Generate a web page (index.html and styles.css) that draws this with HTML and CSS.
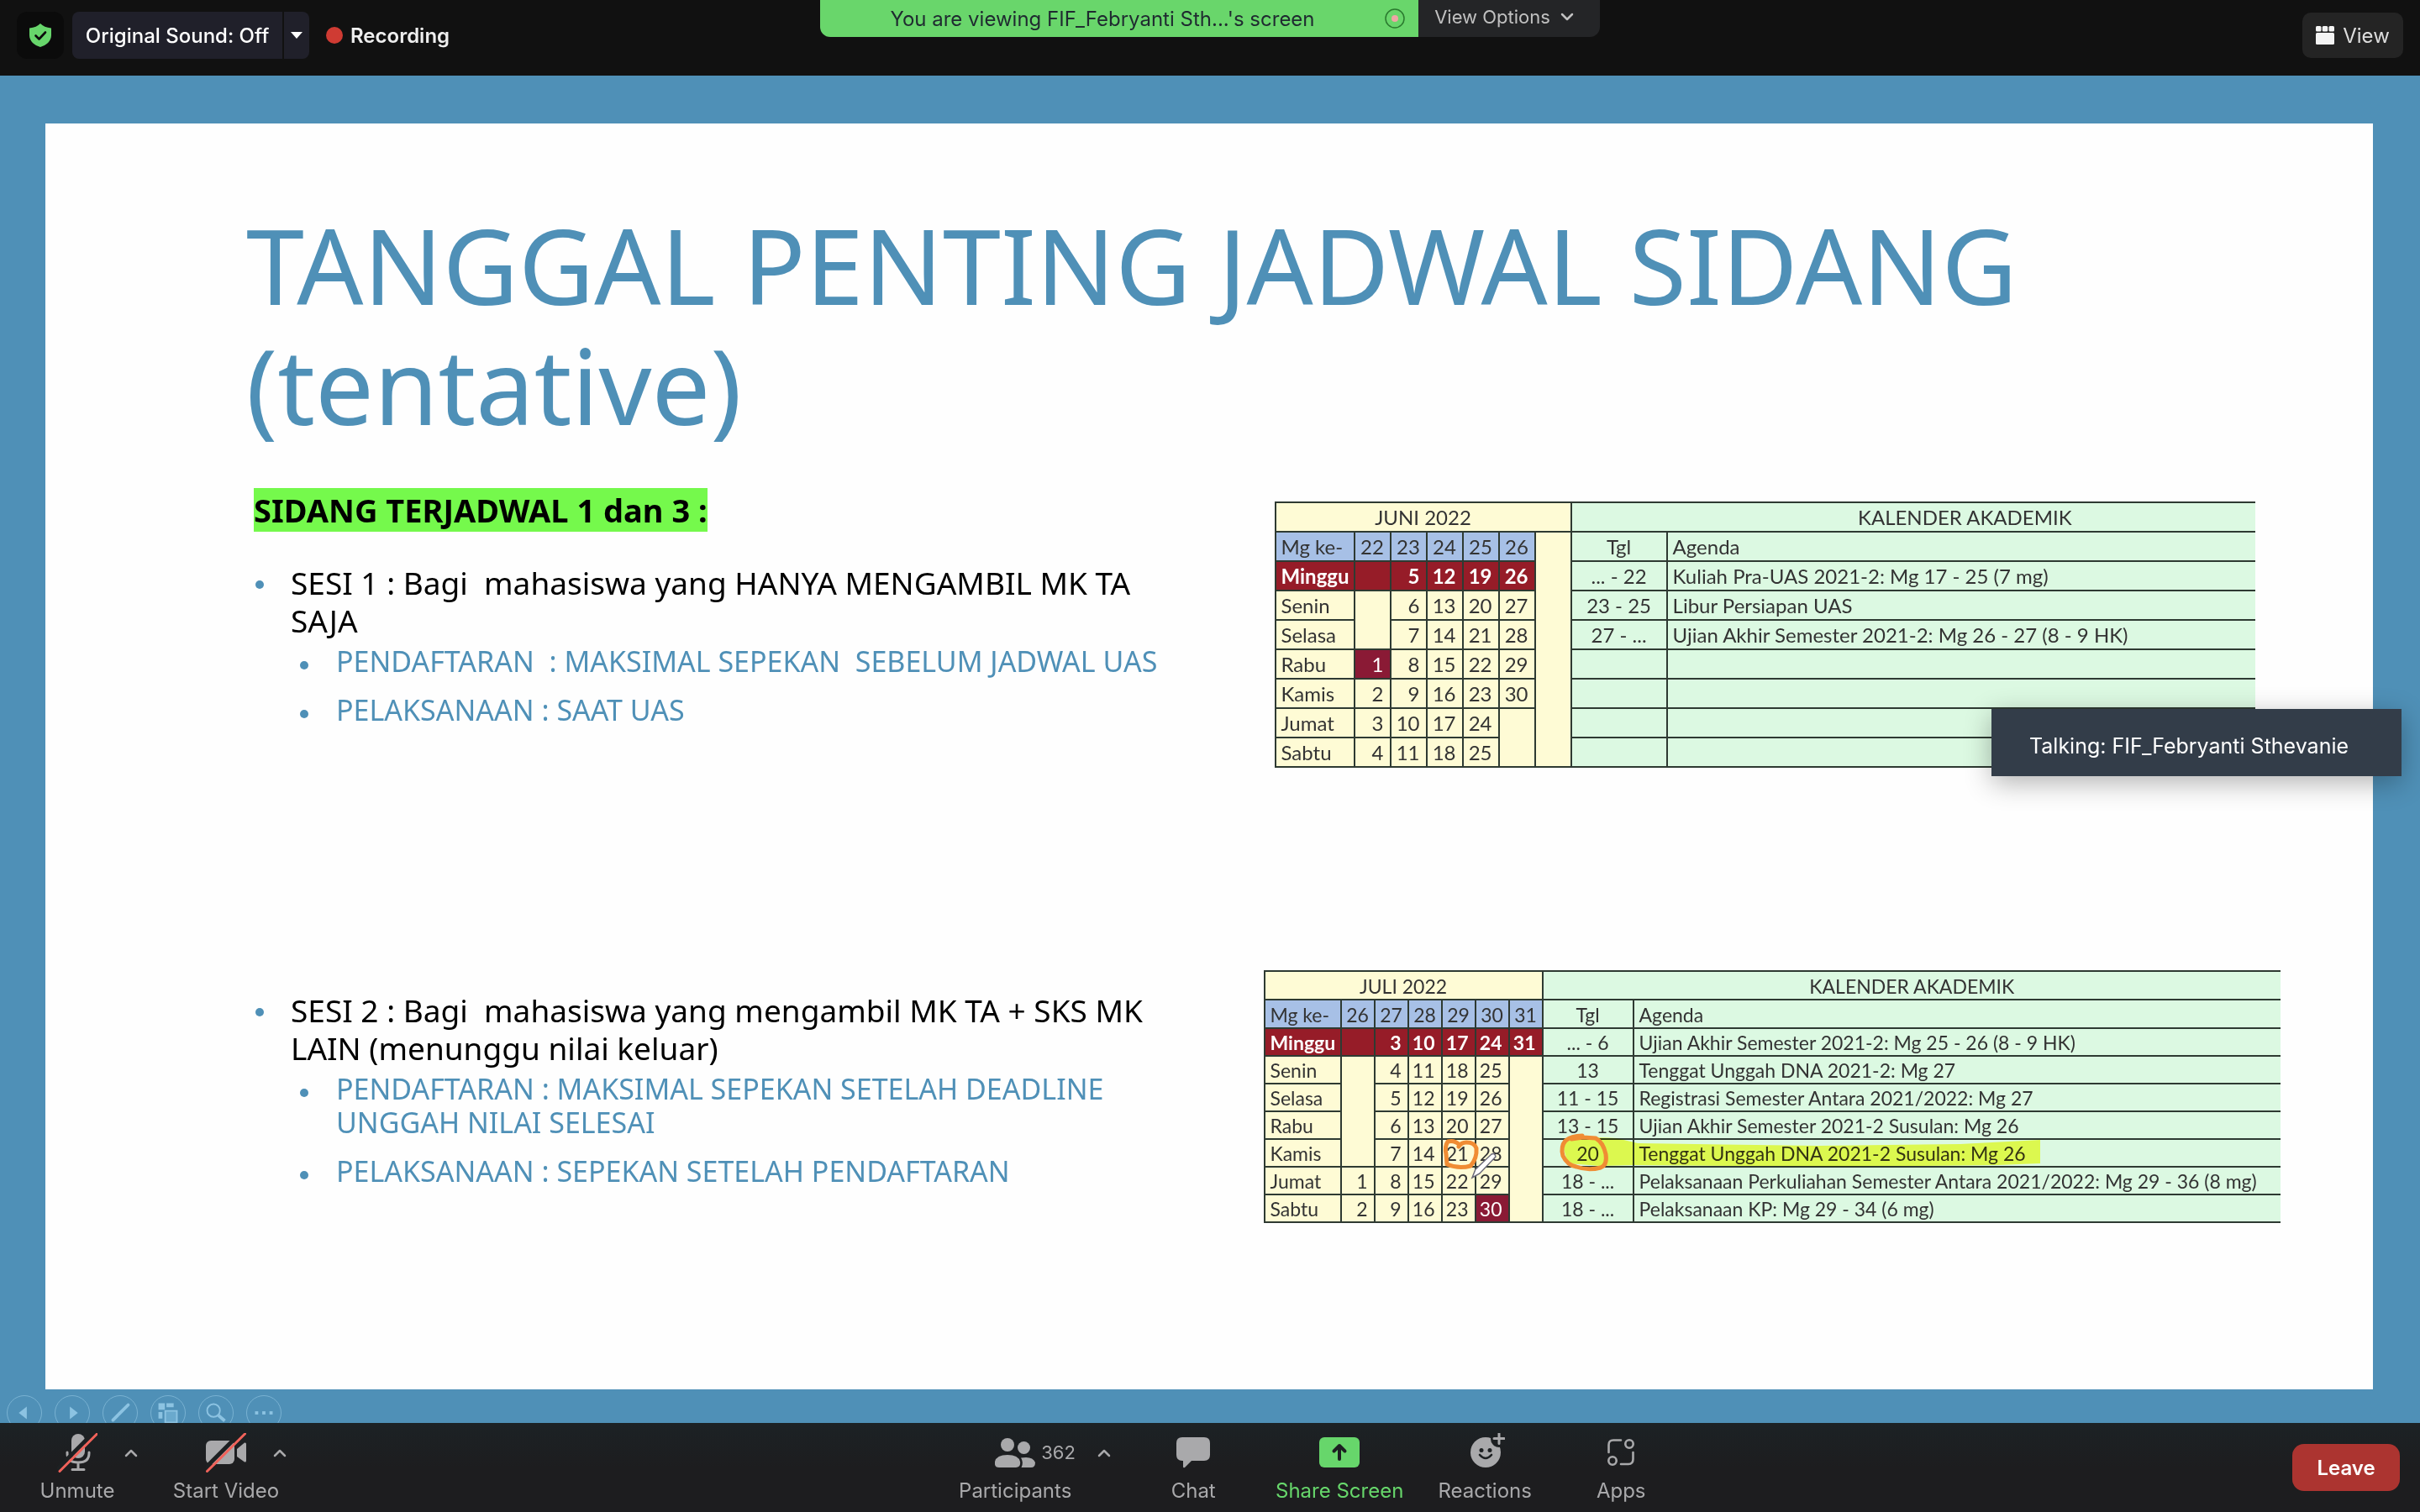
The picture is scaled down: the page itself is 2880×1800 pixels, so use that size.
FILE: index.html
```html
<!DOCTYPE html>
<html lang="id">
<head>
<meta charset="utf-8">
<title>Zoom Meeting</title>
<link rel="stylesheet" href="styles.css">
</head>
<body>
<header class="topbar">
  <div class="topbar-left">
    <button class="shield" aria-label="Meeting information">
      <svg width="26" height="28" viewBox="0 0 26 28"><path d="M13 0C10 3 6 5 0 5.500V14C0 21 6 26 13 28C20 26 26 21 26 14V5.500C20 5 16 3 13 0Z" fill="#67d66b"/><path d="M7.500 14.500L11.500 18.500L19 10.500" fill="none" stroke="#0b0b0b" stroke-width="2.600" stroke-linecap="round" stroke-linejoin="round"/></svg>
    </button>
    <div class="sound">
      <button class="sound-main">Original Sound: Off</button>
      <button class="sound-more" aria-label="Sound options"><svg width="14" height="8" viewBox="0 0 14 8"><path d="M0 0H14L7 8Z" fill="#fff"/></svg></button>
    </div>
    <div class="recording"><span class="rec-dot"></span>Recording</div>
  </div>
  <div class="share-status">
    <div class="viewing"><span class="viewing-text">You are viewing FIF_Febryanti Sth...'s screen</span>
      <svg width="24" height="24" viewBox="0 0 24 24"><circle cx="12" cy="12" r="11" fill="none" stroke="#2a7a2e" stroke-width="1.500"/><circle cx="12" cy="12" r="4" fill="#eea5a5"/></svg>
    </div>
    <button class="view-options">View Options
      <svg width="16" height="10" viewBox="0 0 16 10"><path d="M2 2L8 8L14 2" fill="none" stroke="#c0c0c0" stroke-width="2.500" stroke-linecap="round" stroke-linejoin="round"/></svg>
    </button>
  </div>
  <button class="view">
    <svg width="22" height="22" viewBox="0 0 22 22" fill="#f4f4f4"><rect width="6.500" height="6.500" rx="1.500"/><rect x="7.750" width="6.500" height="6.500" rx="1.500"/><rect x="15.500" width="6.500" height="6.500" rx="1.500"/><rect y="8" width="22" height="14" rx="1.500"/></svg>
    View
  </button>
</header>

<main class="stage">
  <article class="slide">
    <h1 class="title">TANGGAL PENTING JADWAL SIDANG<br>(tentative)</h1>

    <section class="session session-one">
      <h2 class="subtitle"><mark>SIDANG TERJADWAL 1 dan 3 :</mark></h2>
      <ul class="points">
        <li>SESI 1 : Bagi&nbsp; mahasiswa yang HANYA MENGAMBIL MK TA<br>SAJA
          <ul class="subpoints">
            <li>PENDAFTARAN&nbsp; : MAKSIMAL SEPEKAN&nbsp; SEBELUM JADWAL UAS</li>
            <li>PELAKSANAAN : SAAT UAS</li>
          </ul>
        </li>
      </ul>
    </section>

    <div class="calendar calendar-june">
      <table>
        <colgroup><col class="day"><col class="wk" span="6"><col class="tgl"><col></colgroup>
        <tr><th class="month" colspan="7">JUNI 2022</th><th class="agenda-title" colspan="2">KALENDER AKADEMIK</th></tr>
        <tr class="weeks"><th class="name">Mg ke-</th><th>22</th><th>23</th><th>24</th><th>25</th><th>26</th><td rowspan="8"></td><th class="date">Tgl</th><th class="event">Agenda</th></tr>
        <tr class="sunday"><th class="name">Minggu</th><td></td><td>5</td><td>12</td><td>19</td><td>26</td><td class="date">... - 22</td><td class="event">Kuliah Pra-UAS 2021-2: Mg 17 - 25 (7 mg)</td></tr>
        <tr><th class="name">Senin</th><td rowspan="2"></td><td>6</td><td>13</td><td>20</td><td>27</td><td class="date">23 - 25</td><td class="event">Libur Persiapan UAS</td></tr>
        <tr><th class="name">Selasa</th><td>7</td><td>14</td><td>21</td><td>28</td><td class="date">27 - ...</td><td class="event">Ujian Akhir Semester 2021-2: Mg 26 - 27 (8 - 9 HK)</td></tr>
        <tr><th class="name">Rabu</th><td class="holiday">1</td><td>8</td><td>15</td><td>22</td><td>29</td><td class="date"></td><td class="event"></td></tr>
        <tr><th class="name">Kamis</th><td>2</td><td>9</td><td>16</td><td>23</td><td>30</td><td class="date"></td><td class="event"></td></tr>
        <tr><th class="name">Jumat</th><td>3</td><td>10</td><td>17</td><td>24</td><td rowspan="2"></td><td class="date"></td><td class="event"></td></tr>
        <tr><th class="name">Sabtu</th><td>4</td><td>11</td><td>18</td><td>25</td><td class="date"></td><td class="event"></td></tr>
      </table>
    </div>

    <section class="session session-two">
      <ul class="points">
        <li>SESI 2 : Bagi&nbsp; mahasiswa yang mengambil MK TA + SKS MK<br>LAIN (menunggu nilai keluar)
          <ul class="subpoints">
            <li>PENDAFTARAN : MAKSIMAL SEPEKAN SETELAH DEADLINE<br>UNGGAH NILAI SELESAI</li>
            <li>PELAKSANAAN : SEPEKAN SETELAH PENDAFTARAN</li>
          </ul>
        </li>
      </ul>
    </section>

    <div class="calendar calendar-july">
      <table>
        <colgroup><col class="day"><col class="wk" span="6"><col class="tgl"><col></colgroup>
        <tr class="heading"><th class="month" colspan="7">JULI 2022</th><th class="agenda-title" colspan="2">KALENDER AKADEMIK</th></tr>
        <tr class="heading weeks"><th class="name">Mg ke-</th><th>26</th><th>27</th><th>28</th><th>29</th><th>30</th><th>31</th><th class="date">Tgl</th><th class="event">Agenda</th></tr>
        <tr class="sunday"><th class="name">Minggu</th><td></td><td>3</td><td>10</td><td>17</td><td>24</td><td>31</td><td class="date">... - 6</td><td class="event">Ujian Akhir Semester 2021-2: Mg 25 - 26 (8 - 9 HK)</td></tr>
        <tr><th class="name">Senin</th><td rowspan="4"></td><td>4</td><td>11</td><td>18</td><td>25</td><td rowspan="6"></td><td class="date">13</td><td class="event">Tenggat Unggah DNA 2021-2: Mg 27</td></tr>
        <tr><th class="name">Selasa</th><td>5</td><td>12</td><td>19</td><td>26</td><td class="date">11 - 15</td><td class="event">Registrasi Semester Antara 2021/2022: Mg 27</td></tr>
        <tr><th class="name">Rabu</th><td>6</td><td>13</td><td>20</td><td>27</td><td class="date">13 - 15</td><td class="event">Ujian Akhir Semester 2021-2 Susulan: Mg 26</td></tr>
        <tr><th class="name">Kamis</th><td>7</td><td>14</td><td>21</td><td>28</td><td class="date">20</td><td class="event">Tenggat Unggah DNA 2021-2 Susulan: Mg 26</td></tr>
        <tr><th class="name">Jumat</th><td>1</td><td>8</td><td>15</td><td>22</td><td>29</td><td class="date">18 - ...</td><td class="event">Pelaksanaan Perkuliahan Semester Antara 2021/2022: Mg 29 - 36 (8 mg)</td></tr>
        <tr><th class="name">Sabtu</th><td>2</td><td>9</td><td>16</td><td>23</td><td class="holiday">30</td><td class="date">18 - ...</td><td class="event">Pelaksanaan KP: Mg 29 - 34 (6 mg)</td></tr>
      </table>
      <svg class="marker" width="940" height="260" viewBox="0 0 940 260"><path d="M355 206Q375 197 420 200L445 206L660 209L829 207L924 202V230L873 232L677 234L440 232L400 233L362 230Z" fill="#fffe59"/></svg>
      <svg class="ink" width="940" height="260" viewBox="0 0 940 260">
        <g fill="none" stroke="#f08c34" stroke-width="5" stroke-linecap="round" stroke-linejoin="round">
          <path d="M233 208Q227 202 219 204Q215 210 217 219L218 231Q232 237 246 233Q254 224 253 212Q251 205 241 205Q235 205 232 210"/>
          <path d="M366 201L380 199L395 200Q404 205 407 219Q409 232 401 235Q386 239 372 234Q361 232 356 221Q353 210 359 203Q366 197 379 197"/>
        </g>
        <path d="M248 247L252 237L271 219Q275 217 276 222L257 242Z" fill="#fff" stroke="#6a6a78" stroke-width="1.500"/>
      </svg>
    </div>
  </article>

  <nav class="slide-controls" aria-label="Slide controls">
    <button aria-label="Previous slide"><svg viewBox="0 0 42 42"><path d="M14 21L24 13V29Z" fill="#8cc3e2"/></svg></button>
    <button aria-label="Next slide"><svg viewBox="0 0 42 42"><path d="M28 21L18 13V29Z" fill="#8cc3e2"/></svg></button>
    <button aria-label="Pen"><svg viewBox="0 0 42 42"><path d="M12 30L18 24M19 23L31 11" stroke="#8cc3e2" stroke-width="4" stroke-linecap="round"/></svg></button>
    <button aria-label="All slides"><svg viewBox="0 0 42 42"><path d="M9 9H17V17H9ZM19 9H28V14H19ZM9 20H14V28H9Z" fill="#8cc3e2"/><path d="M17.500 18.500H32V33H17.500Z" fill="#6aa9cd" stroke="#8cc3e2" stroke-width="2"/></svg></button>
    <button aria-label="Magnify"><svg viewBox="0 0 42 42" fill="none" stroke="#8cc3e2"><circle cx="18" cy="18" r="8" stroke-width="2"/><path d="M24 24L32 31" stroke-width="4"/></svg></button>
    <button aria-label="More"><svg viewBox="0 0 42 42" fill="#8cc3e2"><rect x="10" y="19" width="4" height="4"/><rect x="19" y="19" width="4" height="4"/><rect x="28" y="19" width="4" height="4"/></svg></button>
  </nav>

  <div class="talking">Talking: FIF_Febryanti Sthevanie</div>
</main>

<footer class="toolbar">
  <div class="group">
    <div class="control mute">
      <button class="tool"><svg width="48" height="48" viewBox="0 0 48 48"><rect x="17" y="1" width="16" height="29" rx="8" fill="#a9a9ab"/><path d="M12 23V24Q12 35 25 35Q38 35 38 24V23M25 35V43M18 43.500H32" fill="none" stroke="#a9a9ab" stroke-width="3" stroke-linecap="round"/><path d="M0 43L44 -1" stroke="#1d2022" stroke-width="5"/><path d="M3 45.500L48 .5" stroke="#f0625a" stroke-width="3" stroke-linecap="round"/></svg><span>Unmute</span></button>
      <button class="more" aria-label="Audio options"><svg width="16" height="10" viewBox="0 0 16 10"><path d="M2 8L8 2L14 8"/></svg></button>
    </div>
    <div class="control video">
      <button class="tool"><svg width="48" height="48" viewBox="0 0 48 48"><rect y="9" width="34" height="28" rx="6" fill="#a9a9ab"/><path d="M37 19L46 11.500Q48 11 48 13V33Q48 35 46 34.500L37 28Z" fill="#a9a9ab"/><path d="M-2 43L42 -1" stroke="#1d2022" stroke-width="5"/><path d="M1.500 45.500L47 .5" stroke="#f0625a" stroke-width="3" stroke-linecap="round"/></svg><span>Start Video</span></button>
      <button class="more" aria-label="Video options"><svg width="16" height="10" viewBox="0 0 16 10"><path d="M2 8L8 2L14 8"/></svg></button>
    </div>
  </div>
  <div class="group">
    <div class="control people">
      <button class="tool"><svg width="48" height="48" viewBox="0 0 48 48" fill="#a9a9ab"><circle cx="15" cy="14" r="8"/><circle cx="34.500" cy="17.500" r="7.500"/><path d="M0 34Q2 26 15 26Q28 26 30 34Q31 41 25 41H5Q-1 41 0 34Z"/><path d="M31 29.500Q45 27 48 35Q48 41 43 41H31.500Q34.500 35 31 29.500Z"/></svg><span>Participants</span></button>
      <span class="count">362</span>
      <button class="more" aria-label="Participant options"><svg width="16" height="10" viewBox="0 0 16 10"><path d="M2 8L8 2L14 8"/></svg></button>
    </div>
    <button class="tool chat"><svg width="40" height="48" viewBox="0 0 40 48"><path d="M7 5H33Q40 5 40 12V26Q40 33 33 33H18L10 41Q8 42 8 40V33H7Q0 33 0 26V12Q0 5 7 5Z" fill="#a9a9ab"/></svg><span>Chat</span></button>
    <button class="tool share"><svg width="48" height="48" viewBox="0 0 48 48"><rect y="5" width="48" height="36" rx="6" fill="#67d66b"/><path d="M24 31V15M17.500 21.500L24 15L30.500 21.500" fill="none" stroke="#1d2022" stroke-width="4" stroke-linecap="round" stroke-linejoin="round"/></svg><span>Share Screen</span></button>
    <button class="tool reactions"><svg width="48" height="48" viewBox="0 0 48 48"><circle cx="25" cy="23" r="18" fill="#a9a9ab"/><circle cx="41" cy="7" r="10" fill="#1d2022"/><path d="M41 .5V12.500M35 6.500H47" stroke="#a9a9ab" stroke-width="3" stroke-linecap="round"/><circle cx="20" cy="20.500" r="2.500" fill="#1d2022"/><circle cx="30" cy="20.500" r="2.500" fill="#1d2022"/><path d="M18 26Q25 34 32 26" fill="none" stroke="#1d2022" stroke-width="2.600" stroke-linecap="round"/></svg><span>Reactions</span></button>
    <button class="tool apps"><svg width="32" height="48" viewBox="0 0 32 48" fill="none" stroke="#a9a9ab" stroke-width="2.600" stroke-linecap="round"><path d="M1.500 23V14Q1.500 8.500 7 8.500H16M30.500 23V31Q30.500 37 25 37H16"/><circle cx="26" cy="13" r="4.700"/><circle cx="6" cy="33" r="4.700"/></svg><span>Apps</span></button>
  </div>
  <button class="leave">Leave</button>
</footer>
</body>
</html>
```
FILE: styles.css
```css
* { box-sizing: border-box; }

body {
  margin: 0;
  min-height: 100vh;
  display: flex;
  flex-direction: column;
  background: #111;
  font-family: Inter, "Liberation Sans", sans-serif;
  font-size: 24px;
}

button {
  margin: 0;
  padding: 0;
  border: 0;
  background: none;
  color: inherit;
  font: inherit;
}

svg { display: block; }

/* Top bar */
.topbar {
  display: grid;
  grid-template-columns: 1fr auto 1fr;
  height: 90px;
  color: #fff;
}

.topbar-left {
  display: flex;
  align-items: flex-start;
  gap: 10px;
  padding: 14px 0 0 20px;
}

.shield {
  display: grid;
  place-items: center;
  width: 56px;
  height: 56px;
  border-radius: 12px;
  background: #0b0b0b;
}

.sound {
  display: flex;
  gap: 2px;
  height: 56px;
  border-radius: 8px;
  overflow: hidden;
  font-weight: 500;
}

.sound button {
  display: grid;
  place-items: center;
  background: #20202a;
}

.sound-main { width: 250px; }
.sound-more { width: 30px; }

.recording {
  display: flex;
  align-items: center;
  gap: 9px;
  height: 56px;
  padding-left: 10px;
  color: #eee;
  font-weight: 600;
}

.rec-dot {
  width: 20px;
  height: 20px;
  border-radius: 50%;
  background: #cf3b33;
}

.share-status {
  display: flex;
  height: 44px;
  border-radius: 0 0 12px 12px;
  overflow: hidden;
}

.viewing {
  display: flex;
  align-items: center;
  width: 712px;
  padding-right: 16px;
  background: #69d66b;
  color: #1f2a30;
}

.viewing-text {
  flex: 1;
  text-align: center;
}

.view-options {
  display: flex;
  justify-content: center;
  align-items: center;
  gap: 12px;
  width: 216px;
  padding: 0 12px 4px 0;
  background: #242527;
  color: #c0c0c0;
  font-size: 22px;
}

.view {
  display: flex;
  justify-content: center;
  align-items: center;
  justify-self: end;
  gap: 10px;
  width: 120px;
  height: 54px;
  margin: 15px 20px 0 0;
  border-radius: 10px;
  background: #242424;
  color: #ddd;
}

/* Shared slide */
.stage {
  position: relative;
  flex: 1;
  display: flex;
  padding: 57px 56px 40px 54px;
  overflow: hidden;
  background: #4f90b7;
}

.slide {
  flex: 1;
  display: grid;
  grid-template-columns: 1fr 1fr;
  grid-template-rows: auto 574px 1fr;
  padding: 96px 110px 0 239px;
  background: #fefefe;
  font-family: "Noto Sans", sans-serif;
}

.title {
  grid-column: 1 / -1;
  margin: 0;
  padding-bottom: 52px;
  color: #4f90b7;
  font-size: 124px;
  font-weight: 400;
  line-height: 143px;
}

.session {
  color: #000;
  font-size: 37px;
  line-height: 45px;
}

.subtitle {
  margin: 0 0 38px 9px;
  font-size: 38px;
  line-height: 52px;
}

.subtitle mark {
  display: inline-block;
  background: #75f94c;
  color: #000;
}

.points, .subpoints {
  margin: 0;
  padding: 0;
  list-style: none;
}

.points > li {
  position: relative;
  padding-left: 53px;
}

.points li::before {
  content: "";
  position: absolute;
  top: 20px;
  left: 11px;
  width: 10px;
  height: 10px;
  border-radius: 50%;
  background: #4f90b7;
}

.subpoints {
  display: grid;
  gap: 18px;
  padding-top: 6px;
  color: #4f90b7;
  font-size: 34px;
  line-height: 40px;
}

.subpoints li {
  position: relative;
  padding-left: 54px;
}

.session-two { padding-top: 25px; }

/* Calendars */
.calendar {
  position: relative;
  font-family: Lato, sans-serif;
  font-size: 24px;
  line-height: 28px;
  color: #333;
}

.calendar-june { padding: 16px 30px 0 13px; }
.calendar-july { font-size: 23px; }

.calendar table {
  width: 100%;
  table-layout: fixed;
  border-collapse: collapse;
  border: 2px solid #2e3a32;
  border-right: 0;
  background: #fefbd5;
}

.calendar tr { height: 35px; }
.calendar-july tr { height: 33px; }
.calendar-july .heading { height: 34px; }

.calendar th, .calendar td {
  padding: 1px 7px 0 0;
  border: 2px solid #2e3a32;
  font-weight: 400;
  text-align: right;
  white-space: nowrap;
}

.calendar tr > :last-child.event,
.calendar .agenda-title { border-right: 0; }

.day { width: 94px; }
.wk { width: 43px; }
.tgl { width: 114px; }
.calendar-july .day { width: 91px; }
.calendar-july .wk { width: 40px; }
.calendar-july .tgl { width: 108px; }

.calendar .month { padding: 1px 0 0; text-align: center; }
.calendar .name { padding: 1px 0 0 6px; text-align: left; }
.calendar .weeks th { background: #a7c0e6; }
.calendar .weeks th:not(.name) { padding: 1px 0 0; text-align: center; }
.calendar .sunday th, .calendar .sunday td {
  background: #961c28;
  color: #fff;
  font-weight: 700;
}
.calendar .holiday { background: #8a1a35; color: #fff; }

.calendar .agenda-title {
  padding: 1px 0 0;
  background: #dcf9e2;
  text-align: center;
}
.calendar-june .agenda-title { padding-left: 122px; }

.calendar tr .date.date, .calendar tr .event.event {
  padding: 1px 0 0;
  background: #dcf9e2;
  color: #333;
  font-weight: 400;
  text-align: center;
}
.calendar tr .event.event { padding-left: 6px; text-align: left; }

.marker, .ink {
  position: absolute;
  top: 0;
  left: 0;
}
.marker { mix-blend-mode: multiply; }

/* Overlays on the shared screen */
.slide-controls {
  position: absolute;
  left: 8px;
  bottom: -9px;
  display: flex;
  gap: 15px;
}

.slide-controls button {
  width: 42px;
  height: 42px;
  border: 1px solid #79b2d2;
  border-radius: 50%;
}

.talking {
  position: absolute;
  top: 754px;
  right: 22px;
  min-width: 488px;
  padding: 28px 45px 20px;
  background: #333d49;
  box-shadow: 0 8px 32px rgba(0, 0, 0, 0.3);
  color: #fff;
  font-size: 25px;
  line-height: 32px;
}

/* Meeting toolbar */
.toolbar {
  display: grid;
  grid-template-columns: 39% auto 1fr;
  height: 106px;
  background: linear-gradient(#1c2225, #1d1d1f 50%);
  color: #a9a9ab;
}

.group { display: flex; padding-top: 12px; }

.control { position: relative; }

.tool {
  display: flex;
  flex-direction: column;
  align-items: center;
  gap: 6px;
  width: 100%;
  line-height: 30px;
}

.mute { width: 184px; }
.video { width: 170px; }
.people { width: 170px; margin-right: 42px; }
.chat { width: 170px; }
.share { width: 178px; color: #67d66b; }
.reactions { width: 168px; }
.apps { width: 156px; }

.more {
  position: absolute;
  top: 14px;
  left: calc(50% + 52px);
  display: grid;
  place-items: center;
  width: 24px;
  height: 20px;
}

.people .more { left: calc(50% + 94px); }

.more path {
  fill: none;
  stroke: #a9a9ab;
  stroke-width: 2.5px;
  stroke-linecap: round;
  stroke-linejoin: round;
}

.count {
  position: absolute;
  top: 8px;
  left: calc(50% + 31px);
  font-size: 22px;
  line-height: 30px;
}

.leave {
  justify-self: end;
  align-self: start;
  width: 128px;
  height: 56px;
  margin: 25px 24px 0 0;
  border-radius: 14px;
  background: #ac3430;
  color: #fff;
  font-weight: 600;
}
```
